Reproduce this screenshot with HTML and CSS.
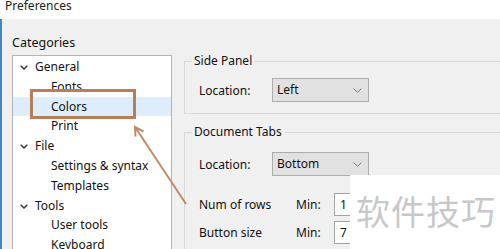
FILE: index.html
```html
<!DOCTYPE html>
<html lang="en">
<head>
  <meta charset="UTF-8" />
  <title>Preferences</title>
  <link rel="stylesheet" href="styles.css">
</head>
<body>
  <div class="titlebar">Preferences</div>

  <div class="window">
    <div class="sidebar">
      <div class="cat-label">Categories</div>
      <div class="tree">
        <div class="node"><svg class="twisty" width="8" height="5" viewBox="0 0 8 5"><path d="M0.7 0.7 L4 4 L7.3 0.7" /></svg>General</div>
        <div class="leaf">Fonts</div>
        <div class="leaf selected">Colors</div>
        <div class="leaf">Print</div>
        <div class="node"><svg class="twisty" width="8" height="5" viewBox="0 0 8 5"><path d="M0.7 0.7 L4 4 L7.3 0.7" /></svg>File</div>
        <div class="leaf">Settings &amp; syntax</div>
        <div class="leaf">Templates</div>
        <div class="node"><svg class="twisty" width="8" height="5" viewBox="0 0 8 5"><path d="M0.7 0.7 L4 4 L7.3 0.7" /></svg>Tools</div>
        <div class="leaf">User tools</div>
        <div class="leaf">Keyboard</div>
      </div>
    </div>

    <div class="content">
      <fieldset class="group side-panel">
        <legend>Side Panel</legend>
        <div class="row">
          <span class="label">Location:</span>
          <div class="combo">Left<svg class="drop" width="9" height="5" viewBox="0 0 9 5"><path d="M0.5 0.5 L4.5 4.3 L8.5 0.5" /></svg></div>
        </div>
      </fieldset>

      <fieldset class="group doc-tabs">
        <legend>Document Tabs</legend>
        <div class="row">
          <span class="label">Location:</span>
          <div class="combo">Bottom<svg class="drop" width="9" height="5" viewBox="0 0 9 5"><path d="M0.5 0.5 L4.5 4.3 L8.5 0.5" /></svg></div>
        </div>
        <div class="row spin-row first">
          <span class="label">Num of rows</span>
          <span class="min">Min:</span>
          <div class="spin">1</div>
        </div>
        <div class="row spin-row">
          <span class="label">Button size</span>
          <span class="min">Min:</span>
          <div class="spin">7</div>
        </div>
      </fieldset>
    </div>
  </div>

  <!-- annotation drawn on top of the screenshot -->
  <div class="mark"></div>
  <svg class="arrow" width="500" height="249" viewBox="0 0 500 249">
    <path d="M186 204 L135 127 M135.5 136.5 L135 127 L143.5 131.5" />
  </svg>

  <div class="watermark">软件技巧</div>
</body>
</html>
```

FILE: styles.css
```css
body {
  margin: 0;
  width: 500px;
  height: 249px;
  overflow: hidden;
  font-family: "Noto Sans", sans-serif;
  font-size: 12px;
  color: #111;
  background: #f0f0f0;
}

.titlebar {
  height: 19px;
  background: #fff;
  padding-left: 5px;
  line-height: 11px;
  font-size: 12px;
  color: #222;
}

.window {
  display: flex;
  border-left: 2px solid #3a86c6;
  height: 230px;
}

.sidebar {
  width: 160px;
  padding-left: 10px;
  flex-shrink: 0;
}

.cat-label {
  margin-top: 16px;
  line-height: 16px;
  font-size: 12.5px;
}

.tree {
  margin-top: 4px;
  height: 200px;
  background: #fff;
  border: 1px solid #b4b4b4;
  border-bottom: none;
  padding-top: 1px;
}

.node,
.leaf {
  height: 19.8px;
  line-height: 19.8px;
  white-space: nowrap;
}

.node {
  padding-left: 22px;
  position: relative;
}

.twisty {
  position: absolute;
  left: 7px;
  top: 8px;
  fill: none;
  stroke: #333;
  stroke-width: 1.4;
}

.leaf {
  padding-left: 38px;
}

.selected {
  background: #ddedfc;
}

.content {
  flex: 1;
  margin-left: 12px;
  padding-top: 34px;
}

.group {
  margin: 0;
  padding: 0 0 11px 0;
  border: 1px solid #d9d9d9;
  border-right: none;
}

.group legend {
  margin-left: 7px;
  padding: 0 2px;
  line-height: 16px;
}

.side-panel .row {
  margin-top: 9px;
}

.doc-tabs {
  margin-top: 10px;
}

.doc-tabs .row {
  margin-top: 12px;
}

.row {
  display: flex;
  align-items: center;
  padding-left: 14px;
}

.label {
  width: 73px;
}

.combo {
  width: 91px;
  height: 22px;
  line-height: 22px;
  padding-left: 4px;
  background: #e1e1e1;
  border: 1px solid #adadad;
  display: flex;
  justify-content: space-between;
  align-items: center;
}

.drop {
  margin-right: 6px;
  fill: none;
  stroke: #777;
  stroke-width: 1;
}

.doc-tabs .spin-row {
  margin-top: 5px;
}

.doc-tabs .spin-row.first {
  margin-top: 17px;
}

.spin-row .label {
  width: 97px;
}

.min {
  width: 38px;
}

.spin {
  width: 60px;
  height: 21px;
  line-height: 21px;
  padding-left: 5px;
  background: #fff;
  border: 1px solid #a3a3a3;
}

.mark {
  position: absolute;
  left: 30px;
  top: 89px;
  width: 100px;
  height: 24px;
  border: 3px solid #b97d5a;
}

.arrow {
  position: absolute;
  left: 0;
  top: 0;
  fill: none;
  stroke: #c28a68;
  stroke-width: 2;
}

.watermark {
  position: absolute;
  left: 350px;
  top: 175px;
  width: 150px;
  height: 74px;
  background: #fff;
  color: #c8c8c8;
  font-family: "Noto Sans CJK SC", sans-serif;
  font-size: 34px;
  line-height: 72px;
  padding-left: 6px;
  box-sizing: border-box;
  letter-spacing: 1px;
}
```
